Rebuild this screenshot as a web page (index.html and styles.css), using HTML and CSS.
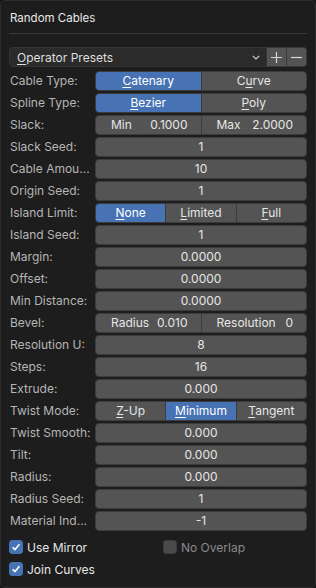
FILE: index.html
```html
<!DOCTYPE html>
<html>
<head>
<meta charset="utf-8">
<link rel="stylesheet" href="styles.css">
</head>
<body>
<div class="panel">
  <div class="title">Random Cables</div>
  <div class="sep"></div>
  <div class="presets">
    <div class="menu"><span><u>O</u>perator Presets</span>
      <svg class="chev" width="8" height="5" viewBox="0 0 8 5"><path d="M0.8 0.8 L4 4 L7.2 0.8" fill="none" stroke="#cfcfcf" stroke-width="1.2"/></svg>
    </div>
    <div class="pm plus"><svg width="11" height="11" viewBox="0 0 11 11"><path d="M5.5 0 V11 M0 5.5 H11" stroke="#d8d8d8" stroke-width="1.2"/></svg></div>
    <div class="pm minus"><svg width="11" height="11" viewBox="0 0 11 11"><path d="M0 5.5 H11" stroke="#d8d8d8" stroke-width="1.2"/></svg></div>
  </div>
  <div class="props">
    <div class="lbl">Cable Type:</div>
    <div class="seg"><div class="b on"><u>C</u>atenary</div><div class="b">C<u>u</u>rve</div></div>

    <div class="lbl">Spline Type:</div>
    <div class="seg"><div class="b on"><u>B</u>ezier</div><div class="b"><u>P</u>oly</div></div>

    <div class="lbl">Slack:</div>
    <div class="seg"><div class="b kv"><span>Min</span><span>0.1000</span></div><div class="b kv"><span>Max</span><span>2.0000</span></div></div>

    <div class="lbl">Slack Seed:</div>
    <div class="field">1</div>

    <div class="lbl">Cable Amou...</div>
    <div class="field">10</div>

    <div class="lbl">Origin Seed:</div>
    <div class="field">1</div>

    <div class="lbl">Island Limit:</div>
    <div class="seg"><div class="b on"><u>N</u>one</div><div class="b"><u>L</u>imited</div><div class="b"><u>F</u>ull</div></div>

    <div class="lbl">Island Seed:</div>
    <div class="field">1</div>

    <div class="lbl">Margin:</div>
    <div class="field">0.0000</div>

    <div class="lbl">Offset:</div>
    <div class="field">0.0000</div>

    <div class="lbl">Min Distance:</div>
    <div class="field">0.0000</div>

    <div class="lbl">Bevel:</div>
    <div class="seg"><div class="b kv"><span>Radius</span><span>0.010</span></div><div class="b kv"><span>Resolution</span><span>0</span></div></div>

    <div class="lbl">Resolution U:</div>
    <div class="field">8</div>

    <div class="lbl">Steps:</div>
    <div class="field">16</div>

    <div class="lbl">Extrude:</div>
    <div class="field">0.000</div>

    <div class="lbl">Twist Mode:</div>
    <div class="seg"><div class="b"><u>Z</u>-Up</div><div class="b on"><u>M</u>inimum</div><div class="b"><u>T</u>angent</div></div>

    <div class="lbl">Twist Smooth:</div>
    <div class="field">0.000</div>

    <div class="lbl">Tilt:</div>
    <div class="field">0.000</div>

    <div class="lbl">Radius:</div>
    <div class="field">0.000</div>

    <div class="lbl">Radius Seed:</div>
    <div class="field">1</div>

    <div class="lbl">Material Ind...</div>
    <div class="field">-1</div>
  </div>
  <div class="checks">
    <div class="chk"><span class="box on"><svg width="14" height="14" viewBox="0 0 14 14"><path d="M3 7.2 L5.8 10 L11 3.8" fill="none" stroke="#fff" stroke-width="1.8"/></svg></span><span class="ctext">Use Mirror</span></div>
    <div class="chk off"><span class="box"></span><span class="ctext">No Overlap</span></div>
    <div class="chk"><span class="box on"><svg width="14" height="14" viewBox="0 0 14 14"><path d="M3 7.2 L5.8 10 L11 3.8" fill="none" stroke="#fff" stroke-width="1.8"/></svg></span><span class="ctext">Join Curves</span></div>
  </div>
</div>
</body>
</html>
```
FILE: styles.css
```css
* { box-sizing: border-box; }
html, body { margin: 0; padding: 0; background: #161616; }
body { font-family: Inter, "Noto Sans", "DejaVu Sans", sans-serif; font-size: 12px; }
.panel {
  width: 316px; height: 588px;
  background: #1d1d1d;
  border: 1px solid #2d2d2d;
  border-radius: 5px;
  padding: 0 8px 0 8px;
}
.title {
  height: 32px;
  line-height: 34px;
  padding-left: 1px;
  color: #e8e8e8;
  font-size: 11.5px;
}
.sep { height: 1px; background: #393939; margin: 0 0 13px 0; }
.presets { display: flex; height: 20px; margin-bottom: 4px; }
.menu {
  flex: 1;
  display: flex; align-items: center; justify-content: space-between;
  background: #2b2b2b;
  border: 1px solid #353535;
  border-radius: 4px 0 0 4px;
  padding: 0 6px 0 7px;
  color: #dedede;
}
.menu u, .b u { text-decoration-thickness: 1px; text-underline-offset: 2px; }
.pm {
  width: 20px; display: flex; align-items: center; justify-content: center;
  background: #545454;
  border: 1px solid #3a3a3a; border-left: none;
}
.minus { border-radius: 0 4px 4px 0; }
.props {
  display: grid;
  grid-template-columns: 86px 1fr;
  grid-auto-rows: 20px;
  row-gap: 2px;
}
.lbl { color: #b5b5b5; line-height: 20px; padding-left: 1px; white-space: nowrap; overflow: hidden; }
.field {
  background: #545454;
  border: 1px solid #3c3c3c;
  border-radius: 4px;
  color: #e6e6e6;
  text-align: center;
  line-height: 18px;
}
.seg { display: flex; border-radius: 4px; border: 1px solid #3c3c3c; overflow: hidden; }
.b {
  flex: 1;
  background: #545454;
  color: #e6e6e6;
  text-align: center;
  line-height: 18px;
  border-left: 1px solid #3c3c3c;
}
.b:first-child { border-left: none; }
.b.on { background: #4772b3; color: #ffffff; }
.kv { display: flex; justify-content: space-between; padding: 0 13px 0 15px; }
.checks {
  display: grid;
  grid-template-columns: 154px 1fr;
  grid-auto-rows: 22px;
  margin-top: 5px;
}
.chk { display: flex; align-items: center; gap: 4px; color: #e6e6e6; }
.box {
  width: 14px; height: 14px; border-radius: 3px;
  background: #545454; border: 1px solid #3c3c3c;
  display: flex; align-items: center; justify-content: center;
}
.box.on { background: #4772b3; border-color: #4772b3; }
.box svg { display: block; }
.chk.off { color: #8a8a8a; }
.chk.off .box { background: #4a4a4a; }
```
